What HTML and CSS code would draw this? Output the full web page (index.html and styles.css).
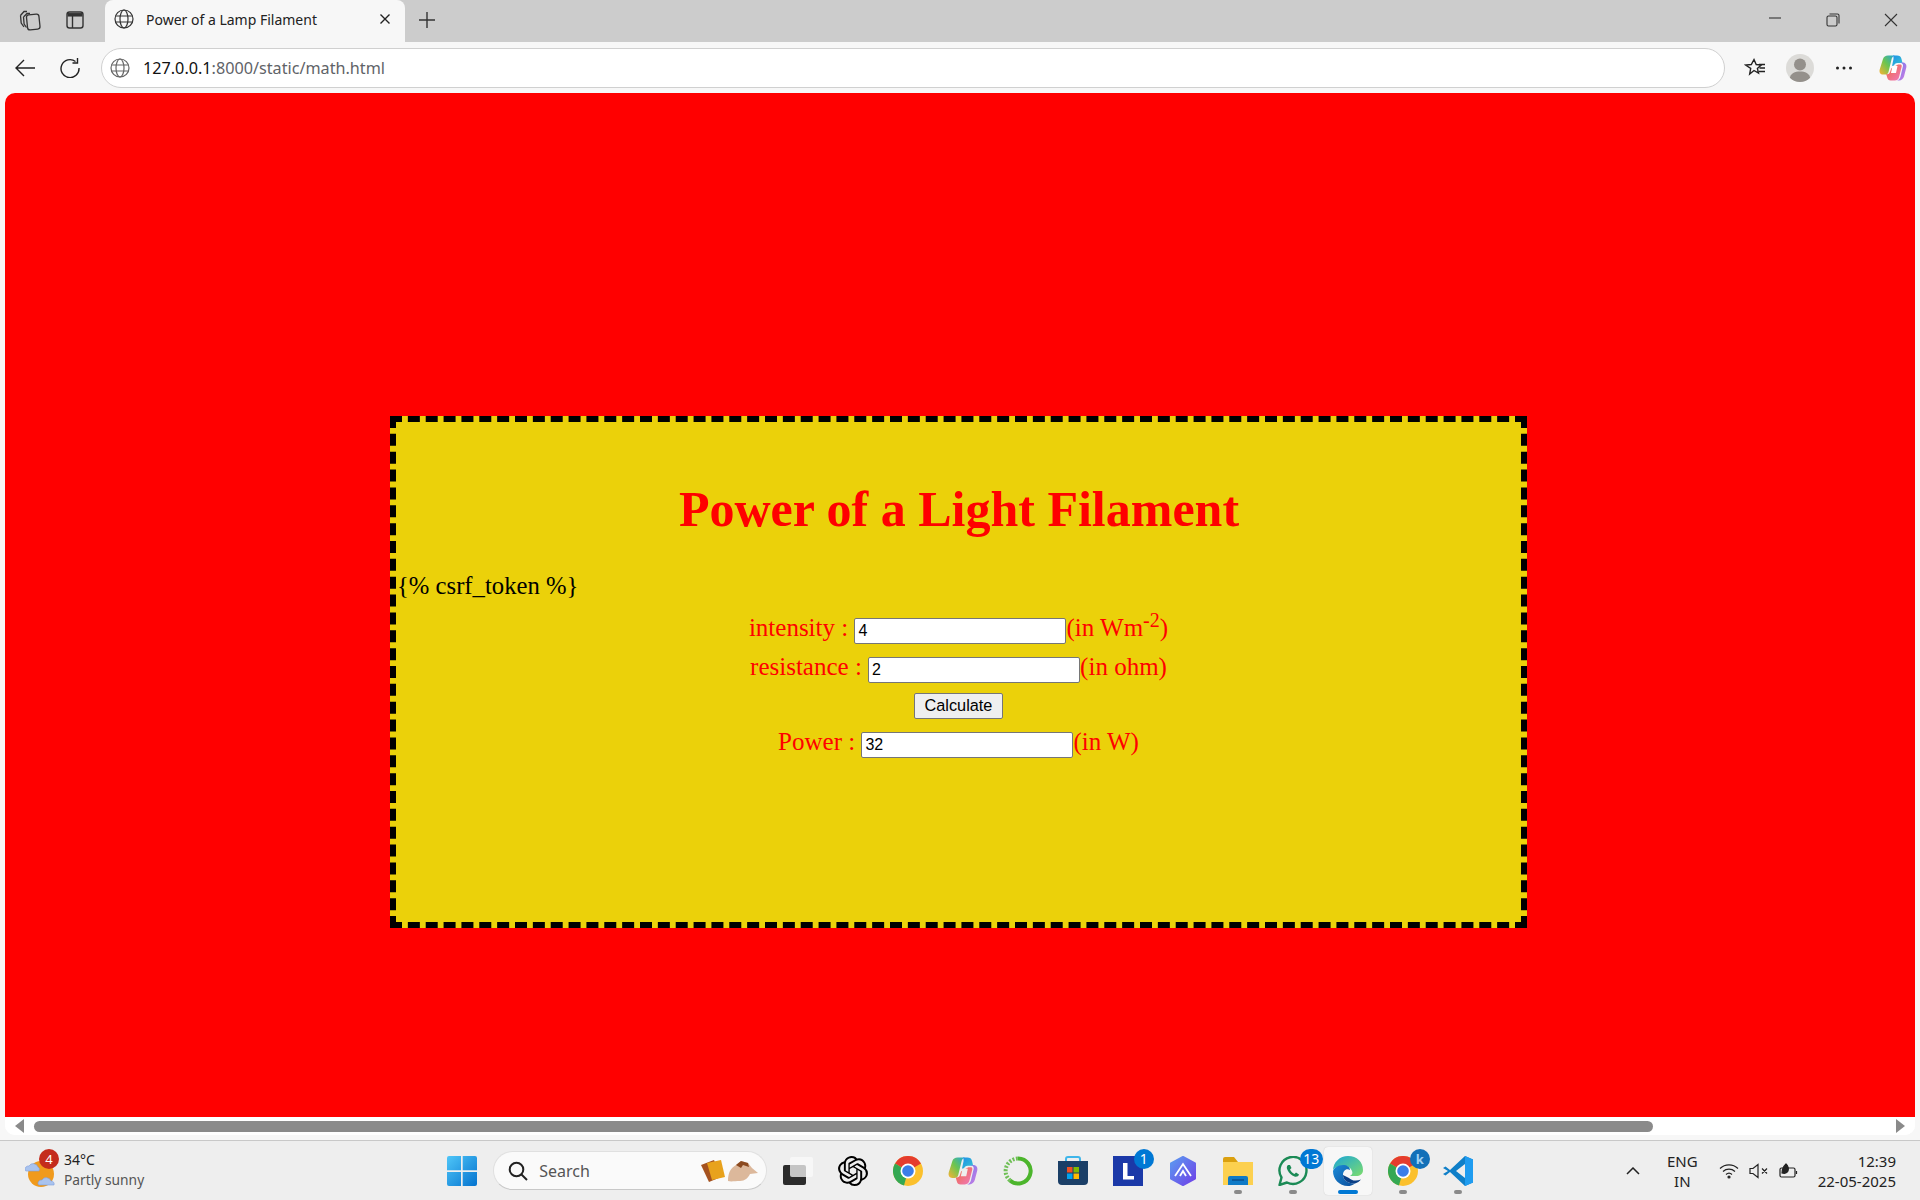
FILE: index.html
```html
<!DOCTYPE html>
<html lang="en">
<head>
    <meta charset="UTF-8">
    <title>Power of a Lamp Filament</title>
    <link rel="stylesheet" href="styles.css">
</head>
<body>
    <div class="tabstrip">
        <span class="strip-btn">
            <svg width="22" height="22" viewBox="0 0 22 22" fill="none" stroke="#333" stroke-width="1.300"><path d="M1.500 6.500 5 2.500h3M1.500 6.500l.7 7.500 2.800 4"/><path d="M4.500 8 8 4.500h3M4.500 8l.6 7 2.400 3.500"/><rect x="8" y="5.500" width="12.500" height="15" rx="2.500" transform="rotate(-6 14 13)"/></svg>
        </span>
        <span class="strip-btn">
            <svg width="20" height="20" viewBox="0 0 20 20" fill="none" stroke="#333" stroke-width="1.400"><rect x="2" y="2" width="16" height="16" rx="2.500"/><path d="M2.500 4.800h15" stroke-width="3.500"/><path d="M7.500 6v12"/></svg>
        </span>
        <div class="tab">
            <svg class="globe" width="20" height="20" viewBox="0 0 20 20" fill="none" stroke="#333" stroke-width="1.200"><circle cx="10" cy="10" r="9"/><ellipse cx="10" cy="10" rx="4" ry="9"/><path d="M1.600 7h16.800M1.600 13h16.800"/></svg>
            <span class="tab-title">Power of a Lamp Filament</span>
            <svg class="tab-close" width="12" height="12" viewBox="0 0 12 12" stroke="#222" stroke-width="1.400"><path d="M1.500 1.500l9 9M10.500 1.500l-9 9"/></svg>
        </div>
        <svg class="new-tab" width="18" height="18" viewBox="0 0 18 18" stroke="#333" stroke-width="1.400"><path d="M9 1v16M1 9h16"/></svg>
        <div class="win-controls">
            <svg width="14" height="14" viewBox="0 0 14 14" stroke="#333" stroke-width="1.100"><path d="M1 5h12"/></svg>
            <svg width="14" height="14" viewBox="0 0 14 14" fill="none" stroke="#333" stroke-width="1.100"><rect x="1" y="3" width="10" height="10" rx="1.500"/><path d="M3.500 1h8a1.500 1.500 0 0 1 1.500 1.500v8"/></svg>
            <svg width="14" height="14" viewBox="0 0 14 14" stroke="#333" stroke-width="1.100"><path d="M1 1l12 12M13 1 1 13"/></svg>
        </div>
    </div>

    <div class="toolbar">
        <svg class="tool-first" width="20" height="20" viewBox="0 0 20 20" fill="none" stroke="#222" stroke-width="1.400"><path d="M20 10H1M9 2l-8 8 8 8"/></svg>
        <svg class="tool-reload" width="20" height="20" viewBox="0 0 20 20" fill="none" stroke="#222" stroke-width="1.400"><path d="M15.500 3.500A9 9 0 1 0 19 10"/><path d="M17.500 0v5h-5"/></svg>
        <div class="address">
            <svg width="20" height="20" viewBox="0 0 20 20" fill="none" stroke="#666" stroke-width="1.200"><circle cx="10" cy="10" r="9"/><ellipse cx="10" cy="10" rx="4" ry="9"/><path d="M1.600 7h16.800M1.600 13h16.800"/></svg>
            <span class="url"><span class="url-host">127.0.0.1</span>:8000/static/math.html</span>
        </div>
        <div class="tool-right">
            <svg width="22" height="22" viewBox="0 0 22 22" fill="none" stroke="#222" stroke-width="1.400"><path d="M10 2.500l2.200 5 5 .5-3.800 3.400 1.100 4.600-4.500-2.500-4.300 3.500 1-5.600L1.500 8l5.800-.5z"/><path d="M15 7.500h6M15.500 11h5.500M15 14.500h6"/></svg>
            <span class="profile">
                <svg width="28" height="28" viewBox="0 0 28 28" fill="#94908b"><circle cx="14" cy="10.500" r="6"/><path d="M3.500 25c1-6 5.500-7.500 10.500-7.500S23.500 19 24.500 25a14 14 0 0 1-21 0z"/></svg>
            </span>
            <svg class="more" width="18" height="6" viewBox="0 0 18 6" fill="#222"><circle cx="2.500" cy="3" r="1.500"/><circle cx="9" cy="3" r="1.500"/><circle cx="15.500" cy="3" r="1.500"/></svg>
            <svg class="copilot" width="28" height="28" viewBox="0 0 28 28">
                <defs>
                    <linearGradient id="copA" x1="0" y1="0" x2="1" y2="1"><stop offset="0" stop-color="#1e8fe8"/><stop offset="1" stop-color="#37c6d0"/></linearGradient>
                    <linearGradient id="copB" x1="0" y1="1" x2="1" y2="0"><stop offset="0" stop-color="#f9b233"/><stop offset=".5" stop-color="#6cc54f"/><stop offset="1" stop-color="#1ea5e0"/></linearGradient>
                    <linearGradient id="copC" x1="0" y1="0" x2="1" y2="1"><stop offset="0" stop-color="#6a7cf0"/><stop offset="1" stop-color="#d57be0"/></linearGradient>
                    <linearGradient id="copD" x1="0" y1="0" x2="1" y2="1"><stop offset="0" stop-color="#f0693a"/><stop offset="1" stop-color="#ef79c0"/></linearGradient>
                </defs>
                <path d="M9 1.500h7c-2 .5-3 2-3.500 4L9.500 18c-.5 2-2 2.500-3.500 2.500H4c-2.500 0-4-2-3.300-5L4 5c.7-2.300 2.500-3.500 5-3.500z" fill="url(#copB)"/>
                <path d="M14 1.500h4c2.500 0 4 1 4.500 3.500l1 4h-5c-2 0-3 1-3.500 2.500l-2 .5 1.500-7c.2-1.300 0-2.300-.5-3.500z" fill="url(#copA)"/>
                <path d="M19 8.500h4.500c2.700 0 4.500 2 3.800 5l-2.300 9c-.7 2.300-2.500 4-5 4H18c2-.5 3-2 3.500-4L24 12c.4-2-1.500-3.500-5-3.500z" fill="url(#copC)"/>
                <path d="M18.500 10.500h3c.5 0 1.500.5 1.200 2l-2.500 10c-.5 2.500-2 4-4.500 4h-4c-2 0-3-1-3.500-3l-1-3.500c2 .5 3.500-.5 4-2.500l1-3 6.800-4z" fill="url(#copD)"/>
                <path d="M13.500 12h5l-1.500 7h-5z" fill="#fff"/>
            </svg>
        </div>
    </div>

    <div class="viewport">
        <div class="page">
            <div class="panel">
                <h1>Power of a Light Filament</h1>
                <form>
                    <div class="csrf">{% csrf_token %}</div>
                    <div class="row">intensity : <input type="text" value="4">(in Wm<sup>-2</sup>)</div>
                    <div class="row">resistance : <input type="text" value="2">(in ohm)</div>
                    <div class="row-btn"><button type="button">Calculate</button></div>
                    <div class="row">Power : <input type="text" value="32">(in W)</div>
                </form>
            </div>
        </div>
        <div class="hscroll">
            <span class="arrow arrow-left"></span>
            <span class="track"><span class="thumb"></span></span>
            <span class="arrow arrow-right"></span>
        </div>
    </div>

    <div class="taskbar">
        <div class="weather">
            <span class="weather-icon">
                <svg width="34" height="36" viewBox="0 0 34 36">
                    <circle cx="16" cy="21" r="13" fill="#f09a1c"/>
                    <path d="M0 17a3.500 3.500 0 0 1 4-4 5 5 0 0 1 9 1 3 3 0 0 1 1 4H1a2 2 0 0 1-1-1z" fill="#a9c3ee" stroke="#7d9ede" stroke-width=".6"/>
                    <path d="M13 31a3.500 3.500 0 0 1 4-4 5 5 0 0 1 9 1 3 3 0 0 1 3 4H14a2 2 0 0 1-1-1z" fill="#a9c3ee" stroke="#7d9ede" stroke-width=".6"/>
                </svg>
                <span class="badge badge-red">4</span>
            </span>
            <div class="weather-text">
                <div>34°C</div>
                <div class="weather-sub">Partly sunny</div>
            </div>
        </div>

        <div class="task-center">
            <span class="slot">
                <svg width="30" height="30" viewBox="0 0 30 30">
                    <defs><linearGradient id="winG" x1="0" y1="0" x2="1" y2="1"><stop offset="0" stop-color="#4fc6f8"/><stop offset="1" stop-color="#0473cf"/></linearGradient></defs>
                    <path d="M2 0h12v14.300H0V2a2 2 0 0 1 2-2zM15.700 0H28a2 2 0 0 1 2 2v12.300H15.700zM0 16h14v14H2a2 2 0 0 1-2-2zM15.700 16H30v12a2 2 0 0 1-2 2H15.700z" fill="url(#winG)"/>
                </svg>
            </span>
            <div class="search">
                <svg width="20" height="20" viewBox="0 0 20 20" fill="none" stroke="#222" stroke-width="2"><circle cx="8.500" cy="8.500" r="6.800"/><path d="M13.500 13.500 19 19"/></svg>
                <span class="search-label">Search</span>
                <svg class="search-art" width="60" height="26" viewBox="0 0 60 26">
                    <path d="M1 7 14 2l7 17-12 5z" fill="#a5521f"/>
                    <path d="M7 5l14-3 4 17-13 3z" fill="#e8a21c"/>
                    <path d="M28 23c0-9 3-13 8-16l5-4 7 2 4 5 6 5-8 1c-2 4-5 7-10 7s-9 1-12 0z" fill="#dcb89b"/>
                    <path d="M36 7l5-4 7 2 1 4-6-2-2 3z" fill="#8b4a20"/>
                </svg>
            </div>
            <span class="slot">
                <svg width="30" height="30" viewBox="0 0 30 30">
                    <rect x="0" y="9" width="23" height="20" rx="2" fill="#2b2b2b"/>
                    <rect x="7" y="1" width="23" height="20" rx="2" fill="#fafafa" fill-opacity=".75"/>
                </svg>
            </span>
            <span class="slot">
                <svg width="30" height="30" viewBox="0 0 24 24"><path d="M22.2819 9.8211a5.9847 5.9847 0 0 0-.5157-4.9108 6.0462 6.0462 0 0 0-6.5098-2.9A6.0651 6.0651 0 0 0 4.9807 4.1818a5.9847 5.9847 0 0 0-3.9977 2.9 6.0462 6.0462 0 0 0 .7427 7.0966 5.98 5.98 0 0 0 .511 4.9107 6.051 6.051 0 0 0 6.5146 2.9001A5.9847 5.9847 0 0 0 13.2599 24a6.0557 6.0557 0 0 0 5.7718-4.2058 5.9894 5.9894 0 0 0 3.9977-2.9001 6.0557 6.0557 0 0 0-.7475-7.0729zm-9.022 12.6081a4.4755 4.4755 0 0 1-2.8764-1.0408l.1419-.0804 4.7783-2.7582a.7948.7948 0 0 0 .3927-.6813v-6.7369l2.02 1.1686a.071.071 0 0 1 .038.052v5.5826a4.504 4.504 0 0 1-4.4945 4.4944zm-9.6607-4.1254a4.4708 4.4708 0 0 1-.5346-3.0137l.142.0852 4.783 2.7582a.7712.7712 0 0 0 .7806 0l5.8428-3.3685v2.3324a.0804.0804 0 0 1-.0332.0615L9.74 19.9502a4.4992 4.4992 0 0 1-6.1408-1.6464zM2.3408 7.8956a4.485 4.485 0 0 1 2.3655-1.9728V11.6a.7664.7664 0 0 0 .3879.6765l5.8144 3.3543-2.0201 1.1685a.0757.0757 0 0 1-.071 0l-4.8303-2.7865A4.504 4.504 0 0 1 2.3408 7.872zm16.5963 3.8558L13.1038 8.364 15.1192 7.2a.0757.0757 0 0 1 .071 0l4.8303 2.7913a4.4944 4.4944 0 0 1-.6765 8.1042v-5.6772a.79.79 0 0 0-.407-.667zm2.0107-3.0231l-.142-.0852-4.7735-2.7818a.7759.7759 0 0 0-.7854 0L9.409 9.2297V6.8974a.0662.0662 0 0 1 .0284-.0615l4.8303-2.7866a4.4992 4.4992 0 0 1 6.6802 4.66zM8.3065 12.863l-2.02-1.1638a.0804.0804 0 0 1-.038-.0567V6.0742a4.4992 4.4992 0 0 1 7.3757-3.4537l-.142.0805L8.704 5.459a.7948.7948 0 0 0-.3927.6813zm1.0976-2.3654l2.602-1.4998 2.6069 1.4998v2.9994l-2.5974 1.4997-2.6067-1.4997Z"/></svg>
            </span>
            <span class="slot">
                <svg width="30" height="30" viewBox="0 0 30 30">
                    <circle cx="15" cy="15" r="15" fill="#fbc02d"/>
                    <path d="M15 15 2 7.500A15 15 0 0 1 28 7.500z" fill="#e53c2e"/>
                    <path d="M15 15 2 7.500A15 15 0 0 0 11 29.500z" fill="#34a853"/>
                    <circle cx="15" cy="15" r="7.500" fill="#fff"/>
                    <circle cx="15" cy="15" r="5.800" fill="#3b7de8"/>
                </svg>
            </span>
            <span class="slot">
                <svg width="30" height="30" viewBox="0 0 28 28">
                    <path d="M9 1.500h7c-2 .5-3 2-3.500 4L9.500 18c-.5 2-2 2.500-3.500 2.500H4c-2.500 0-4-2-3.300-5L4 5c.7-2.300 2.500-3.500 5-3.500z" fill="url(#copB)"/>
                    <path d="M14 1.500h4c2.500 0 4 1 4.500 3.500l1 4h-5c-2 0-3 1-3.500 2.500l-2 .5 1.500-7c.2-1.300 0-2.300-.5-3.500z" fill="url(#copA)"/>
                    <path d="M19 8.500h4.500c2.700 0 4.500 2 3.800 5l-2.300 9c-.7 2.300-2.500 4-5 4H18c2-.5 3-2 3.500-4L24 12c.4-2-1.500-3.500-5-3.500z" fill="url(#copC)"/>
                    <path d="M18.500 10.500h3c.5 0 1.500.5 1.200 2l-2.500 10c-.5 2.500-2 4-4.500 4h-4c-2 0-3-1-3.500-3l-1-3.500c2 .5 3.500-.5 4-2.500l1-3 6.800-4z" fill="url(#copD)"/>
                    <path d="M13.500 12h5l-1.500 7h-5z" fill="#eee"/>
                </svg>
            </span>
            <span class="slot">
                <svg width="30" height="30" viewBox="0 0 30 30" fill="none">
                    <path d="M15 2.500a12.500 12.500 0 1 1-8 22" stroke="#4cb52c" stroke-width="4"/>
                    <path d="M7 24.500A12.500 12.500 0 0 1 15 2.500" stroke="#6fbf56" stroke-width="4" stroke-dasharray="2 1.500"/>
                </svg>
            </span>
            <span class="slot">
                <svg width="30" height="30" viewBox="0 0 30 30">
                    <path d="M8 6V3a2 2 0 0 1 2-2h10a2 2 0 0 1 2 2v3" fill="none" stroke="#3fb6ea" stroke-width="2"/>
                    <path d="M0 5h30v20a4 4 0 0 1-4 4H4a4 4 0 0 1-4-4z" fill="#1b3f67"/>
                    <rect x="9" y="11" width="5.500" height="5.500" fill="#f25022"/>
                    <rect x="15.500" y="11" width="5.500" height="5.500" fill="#7fba00"/>
                    <rect x="9" y="17.500" width="5.500" height="5.500" fill="#00a4ef"/>
                    <rect x="15.500" y="17.500" width="5.500" height="5.500" fill="#ffb900"/>
                </svg>
            </span>
            <span class="slot">
                <svg width="30" height="30" viewBox="0 0 30 30">
                    <rect width="30" height="30" fill="#1b39a8"/>
                    <path d="M10 7h4.500v13H21v3.500H10z" fill="#fff"/>
                </svg>
                <span class="badge badge-blue">1</span>
            </span>
            <span class="slot">
                <svg width="30" height="30" viewBox="0 0 30 30">
                    <defs><linearGradient id="arcG" x1="0" y1="0" x2="1" y2="1"><stop offset="0" stop-color="#5b9cf0"/><stop offset="1" stop-color="#6f3fe8"/></linearGradient></defs>
                    <path d="M15 1l12 6.500v15L15 29 3 22.500v-15z" fill="url(#arcG)" stroke="url(#arcG)" stroke-width="2" stroke-linejoin="round"/>
                    <path d="M7 20 15 8l8 12M12 20l3-5 3 5" fill="none" stroke="#fff" stroke-width="1.800"/>
                </svg>
            </span>
            <span class="slot">
                <svg width="30" height="28" viewBox="0 0 30 28">
                    <path d="M0 2a2 2 0 0 1 2-2h9l4 5h15v6H0z" fill="#dba00f"/>
                    <path d="M0 5h30v23H0z" fill="#fcd04f"/>
                    <path d="M5 21a2 2 0 0 1 2-2h16a2 2 0 0 1 2 2v7H5z" fill="#0f7ac6"/>
                    <path d="M9 23h12" stroke="#0a4f8c" stroke-width="1.500"/>
                </svg>
                <span class="run-dot"></span>
            </span>
            <span class="slot">
                <svg width="30" height="30" viewBox="0 0 30 30" fill="none">
                    <path d="M1.500 29l2-7.500A13.500 13.500 0 1 1 9 26.500z" stroke="#1b8a55" stroke-width="2.400" stroke-linejoin="round"/>
                    <path d="M10 9c-1.500 1-1.500 3-.5 5 1.500 3 4 5.500 7 6.500 2 .5 4 0 4.500-2l-3-2-1.500 1.500c-2-1-3.500-2.500-4.500-4.500L13.500 12l-1.500-3z" fill="#1b8a55"/>
                </svg>
                <span class="badge badge-blue badge-wide">13</span>
                <span class="run-dot"></span>
            </span>
            <span class="slot slot-active">
                <svg width="30" height="30" viewBox="0 0 30 30">
                    <defs>
                        <linearGradient id="edgeA" x1="0" y1="0" x2="1" y2="1"><stop offset="0" stop-color="#1aa6d8"/><stop offset="1" stop-color="#7ddc6c"/></linearGradient>
                        <linearGradient id="edgeB" x1="0" y1="0" x2="1" y2="1"><stop offset="0" stop-color="#1b8bd8"/><stop offset="1" stop-color="#0b4e9c"/></linearGradient>
                    </defs>
                    <path d="M0 15C0 6 7 0 15 0c9 0 15 6 15 14 0 4-3 6-7 6h-6c2-1 3-3 2-5-1-3-4-5-8-5-6 0-11 2-11 5z" fill="url(#edgeA)"/>
                    <path d="M0 15c1-3 5-6 10-6 4 0 7 2 7 5-4-2-7 1-7 5 0 5 5 9 12 8.500C19 29.500 17 30 15 30 6 30 0 23 0 15z" fill="url(#edgeB)"/>
                    <path d="M10 19c0 5 5 9 12 8.500 2.500-.7 4.500-2 6-4-5 2-10 1-12-1.500z" fill="#0a3f86"/>
                </svg>
                <span class="active-bar"></span>
            </span>
            <span class="slot">
                <svg width="30" height="30" viewBox="0 0 30 30">
                    <circle cx="15" cy="15" r="15" fill="#fbc02d"/>
                    <path d="M15 15 2 7.500A15 15 0 0 1 28 7.500z" fill="#e53c2e"/>
                    <path d="M15 15 2 7.500A15 15 0 0 0 11 29.500z" fill="#34a853"/>
                    <circle cx="15" cy="15" r="7.500" fill="#fff"/>
                    <circle cx="15" cy="15" r="5.800" fill="#3b7de8"/>
                </svg>
                <span class="badge badge-profile">k</span>
                <span class="run-dot"></span>
            </span>
            <span class="slot">
                <svg width="30" height="30" viewBox="0 0 30 30">
                    <path d="M22 0 30 3.500v23L22 30 7 16l-4.500 3.500L0 18l5-3-5-3 2.500-1.500L7 14z" fill="#0f7fc8"/>
                    <path d="M22 0 30 3.500v23L22 30z" fill="#1f9cf0"/>
                    <path d="M22 8v14l-9-7z" fill="#eee"/>
                </svg>
                <span class="run-dot"></span>
            </span>
        </div>

        <div class="tray">
            <svg class="tray-chevron" width="14" height="8" viewBox="0 0 14 8" fill="none" stroke="#222" stroke-width="1.500"><path d="M1 7l6-6 6 6"/></svg>
            <div class="lang">ENG<br>IN</div>
            <svg width="20" height="16" viewBox="0 0 20 16" fill="none" stroke="#222" stroke-width="1.200"><path d="M1 5.500a13 13 0 0 1 18 0M4 8.500a9 9 0 0 1 12 0M7 11.500a4.500 4.500 0 0 1 6 0"/><circle cx="10" cy="14" r="1" fill="#222"/></svg>
            <svg width="20" height="16" viewBox="0 0 20 16" fill="none" stroke="#222" stroke-width="1.200"><path d="M1 5.500h3L9 1.500v13l-5-4H1zM13 5.500l5 5M18 5.500l-5 5"/></svg>
            <svg width="20" height="16" viewBox="0 0 20 16" fill="none" stroke="#222" stroke-width="1.200"><rect x="1" y="5" width="15" height="9" rx="1.500"/><path d="M17.500 8v3"/><path d="M3 10c0-4 2-7 4-9 2 2 3 4 2 7-1 2-3 3-6 2z" fill="#222"/></svg>
            <div class="clock">12:39<br>22-05-2025</div>
        </div>
    </div>
</body>
</html>
```

FILE: styles.css
```css
* {
    box-sizing: border-box;
}
html, body {
    height: 100%;
}
body {
    margin: 0;
    display: flex;
    flex-direction: column;
    overflow: hidden;
    background: #f7f7f7;
    font-family: "Noto Sans", "Open Sans", sans-serif;
    color: #222;
}

/* browser top */
.tabstrip {
    height: 42px;
    padding-bottom: 2px;
    background: #cccccc;
    display: flex;
    align-items: center;
}
.strip-btn {
    width: 45px;
    height: 40px;
    display: flex;
    align-items: center;
    justify-content: center;
}
.strip-btn:first-child {
    margin-left: 7px;
}
.tab {
    width: 300px;
    height: 42px;
    margin: 2px 0 0 8px;
    padding: 0 14px 4px 9px;
    background: #f7f7f7;
    border-radius: 8px 8px 0 0;
    display: flex;
    align-items: center;
}
.tab-title {
    margin-left: 12px;
    font-size: 14px;
    flex: 1;
}
.new-tab {
    margin-left: 13px;
}
.win-controls {
    margin-left: auto;
    width: 130px;
    margin-right: 22px;
    display: flex;
    justify-content: space-between;
}
.toolbar {
    height: 51px;
    display: flex;
    align-items: center;
    background: #f7f7f7;
}
.tool-first {
    margin-left: 15px;
}
.tool-reload {
    margin-left: 25px;
}
.address {
    margin-left: 21px;
    width: 1624px;
    height: 40px;
    padding-left: 8px;
    background: #fff;
    border: 1px solid #d0d0d0;
    border-radius: 20px;
    display: flex;
    align-items: center;
}
.url {
    margin-left: 13px;
    font-size: 16.200px;
    color: #5f6368;
}
.url-host {
    color: #111;
}
.tool-right {
    margin-left: 19px;
    display: flex;
    align-items: center;
    gap: 20px;
}
.more {
    margin-left: 1px;
}
.copilot {
    margin-left: 6px;
}
.profile {
    width: 28px;
    height: 28px;
    background: #dcdbd8;
    border-radius: 50%;
    overflow: hidden;
}
.profile svg {
    display: block;
}

/* page */
.viewport {
    flex: 1;
    margin: 0 5px;
    display: flex;
    flex-direction: column;
    border-radius: 10px;
    overflow: hidden;
    background: #fff;
}
.page {
    height: 1024px;
    background: #ff0000;
    padding: 323px 0 0 385px;
}
.panel {
    width: 1137px;
    height: 512px;
    border: 6px dashed #000;
    background: #ebd10a;
    font-family: "Liberation Serif", "Times New Roman", serif;
    font-size: 25px;
}
.panel h1 {
    margin: 0;
    padding: 58px 0 0 1px;
    font-size: 50px;
    line-height: 58px;
    color: #ff0000;
    text-align: center;
}
.csrf {
    margin: 34px 0 8px 1px;
    line-height: 28px;
    font-size: 24.700px;
    color: #000;
}
.row {
    height: 39px;
    text-align: center;
    color: #ff0000;
    line-height: 39px;
}
.row input {
    width: 212px;
    height: 26px;
    padding: 1px 3px;
    border: 1px solid #767676;
    border-radius: 2px;
    background: #fff;
    font-family: "Liberation Sans", Arial, sans-serif;
    font-size: 16px;
    color: #000;
}
.row sup {
    font-size: 20px;
    line-height: 0;
}
.row-btn {
    height: 36px;
    padding-top: 3px;
    text-align: center;
}
.row-btn button {
    width: 89px;
    height: 26px;
    padding: 0;
    border: 1px solid #767676;
    border-radius: 2px;
    background: #efefef;
    font-family: "Liberation Sans", Arial, sans-serif;
    font-size: 16.300px;
    color: #000;
}
.hscroll {
    height: 18px;
    display: flex;
    align-items: center;
    background: #fff;
}
.arrow {
    width: 0;
    height: 0;
    border-top: 7px solid transparent;
    border-bottom: 7px solid transparent;
}
.arrow-left {
    margin-left: 10px;
    border-right: 9px solid #8a8a8a;
}
.arrow-right {
    margin-right: 10px;
    border-left: 9px solid #8a8a8a;
}
.track {
    flex: 1;
    padding: 0 10px;
}
.thumb {
    display: block;
    width: 1619px;
    height: 11px;
    background: #8a8a8a;
    border-radius: 6px;
}

/* taskbar */
.taskbar {
    height: 60px;
    margin-top: 5px;
    background: #eeeeee;
    border-top: 1px solid #c8c8c8;
    display: grid;
    grid-template-columns: 1fr auto 1fr;
    align-items: center;
}
.weather {
    display: flex;
    align-items: center;
    padding-left: 25px;
}
.weather-icon {
    position: relative;
    width: 39px;
    height: 36px;
}
.weather-text {
    padding-bottom: 2px;
    font-size: 14px;
    line-height: 20px;
}
.weather-sub {
    font-size: 13.800px;
    color: #555;
}
.badge {
    position: absolute;
    min-width: 20px;
    height: 20px;
    border-radius: 10px;
    color: #fff;
    font-size: 13px;
    line-height: 20px;
    text-align: center;
}
.badge-red {
    left: 14px;
    top: -4px;
    background: #c42b1c;
}
.badge-blue {
    right: 2px;
    top: 2px;
    background: #0078d4;
    font-size: 14px;
}
.badge-wide {
    right: -2px;
    min-width: 23px;
}
.badge-profile {
    right: 1px;
    top: 2px;
    background: #1270b8;
    color: #9fd2f5;
    font-weight: 700;
}
.task-center {
    display: flex;
    align-items: center;
}
.slot {
    position: relative;
    width: 55px;
    height: 48px;
    display: flex;
    align-items: center;
    justify-content: center;
}
.slot-active {
    background: #f7f7f7;
    border-radius: 4px;
    box-shadow: 0 0 1px #bbb;
    width: 48px;
    margin: 0 3.500px;
}
.run-dot {
    position: absolute;
    bottom: 1px;
    left: 50%;
    width: 8px;
    height: 4px;
    margin-left: -4px;
    background: #8a8a8a;
    border-radius: 2px;
}
.active-bar {
    position: absolute;
    bottom: 1px;
    left: 50%;
    width: 20px;
    height: 4px;
    margin-left: -10px;
    background: #0078d4;
    border-radius: 2px;
}
.search {
    width: 274px;
    height: 39px;
    margin: 0 3.500px 0 4px;
    padding: 0 6px 0 14px;
    background: #fafafa;
    border: 1px solid #e0e0e0;
    border-bottom-color: #c8c8c8;
    border-radius: 20px;
    display: flex;
    align-items: center;
}
.search-label {
    margin-left: 11px;
    font-size: 16px;
    color: #555;
}
.search-art {
    margin-left: auto;
}
.tray {
    display: flex;
    align-items: center;
    justify-content: flex-end;
    padding-right: 24px;
    font-size: 15px;
    line-height: 20px;
}
.tray svg {
    margin-right: 10px;
}
.tray-chevron {
    margin-right: 27px !important;
}
.lang {
    text-align: center;
    margin-right: 21px;
}
.clock {
    margin-left: 9px;
    text-align: right;
}
```
